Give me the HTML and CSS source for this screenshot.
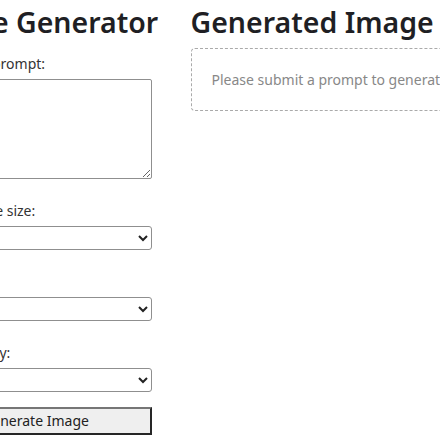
FILE: index.html
```html
<!DOCTYPE html>
<html lang="en">
<head>
<meta charset="utf-8">
<title>Image Generator</title>
<link rel="stylesheet" href="styles.css">
</head>
<body>
<div class="page">
  <div class="col col-left">
    <h1 class="title">Image Generator</h1>
    <form class="form">
      <div class="group">
        <label class="label" for="prompt">Enter your prompt:</label>
        <textarea id="prompt" class="textarea"></textarea>
      </div>
      <div class="group">
        <label class="label" for="size">Select image size:</label>
        <select id="size" class="select"><option>1024x1024</option></select>
      </div>
      <div class="group">
        <label class="label" for="style">Select style:</label>
        <select id="style" class="select"><option>Vivid</option></select>
      </div>
      <div class="group">
        <label class="label" for="quality">Select quality:</label>
        <select id="quality" class="select"><option>Standard</option></select>
      </div>
      <button type="button" class="btn">Generate Image</button>
    </form>
  </div>
  <div class="col col-right">
    <h1 class="title">Generated Image</h1>
    <div class="result">Please submit a prompt to generate an image.</div>
  </div>
</div>
</body>
</html>
```

FILE: styles.css
```css
html, body {
  margin: 0;
  padding: 0;
  background: #ffffff;
}
body {
  font-family: "Noto Sans", "Open Sans", sans-serif;
  font-size: 14px;
  color: #333;
  overflow: hidden;
}
.page {
  display: flex;
  justify-content: center;
  align-items: flex-start;
  gap: 39px;
  width: 100%;
  padding-top: 3px;
}
.col-left {
  flex: 0 0 232px;
  width: 232px;
}
.col-right {
  flex: 0 0 330px;
  width: 330px;
}
.title {
  margin: 0 0 7px;
  font-size: 28.5px;
  line-height: 38px;
  font-weight: 600;
  color: #1f1f24;
  white-space: nowrap;
}
.col-left .title {
  text-align: right;
}
.form {
  display: flex;
  flex-direction: column;
}
.group {
  display: flex;
  flex-direction: column;
  margin-bottom: 16px;
}
.label {
  display: block;
  line-height: 21px;
  margin: 5px 0 5px;
  color: #333;
  white-space: nowrap;
}
.textarea {
  box-sizing: border-box;
  width: 100%;
  height: 100px;
  margin: 0;
  border: 1px solid #8f8f8f;
  border-radius: 2px;
  font-family: inherit;
  font-size: 14px;
}
.select {
  box-sizing: border-box;
  width: 100%;
  height: 24px;
  margin: 0;
  border: 1px solid #8f8f8f;
  border-radius: 3px;
  background: #fff;
  font-family: inherit;
  font-size: 14px;
  color: #222;
}
.btn {
  box-sizing: border-box;
  display: flex;
  align-items: center;
  justify-content: center;
  width: 100%;
  height: 28px;
  margin: -1px 0 0;
  padding: 0;
  border-style: solid;
  border-width: 2px;
  border-color: #767676 #262626 #262626 #767676;
  border-radius: 0;
  background: #efefef;
  font-family: inherit;
  font-size: 14px;
  line-height: 18px;
  color: #222;
  white-space: nowrap;
}
.result {
  border: 1px dashed #aaa;
  border-radius: 4px;
  padding: 20px;
  line-height: 21px;
  color: #888;
  white-space: nowrap;
  overflow: hidden;
}
```
